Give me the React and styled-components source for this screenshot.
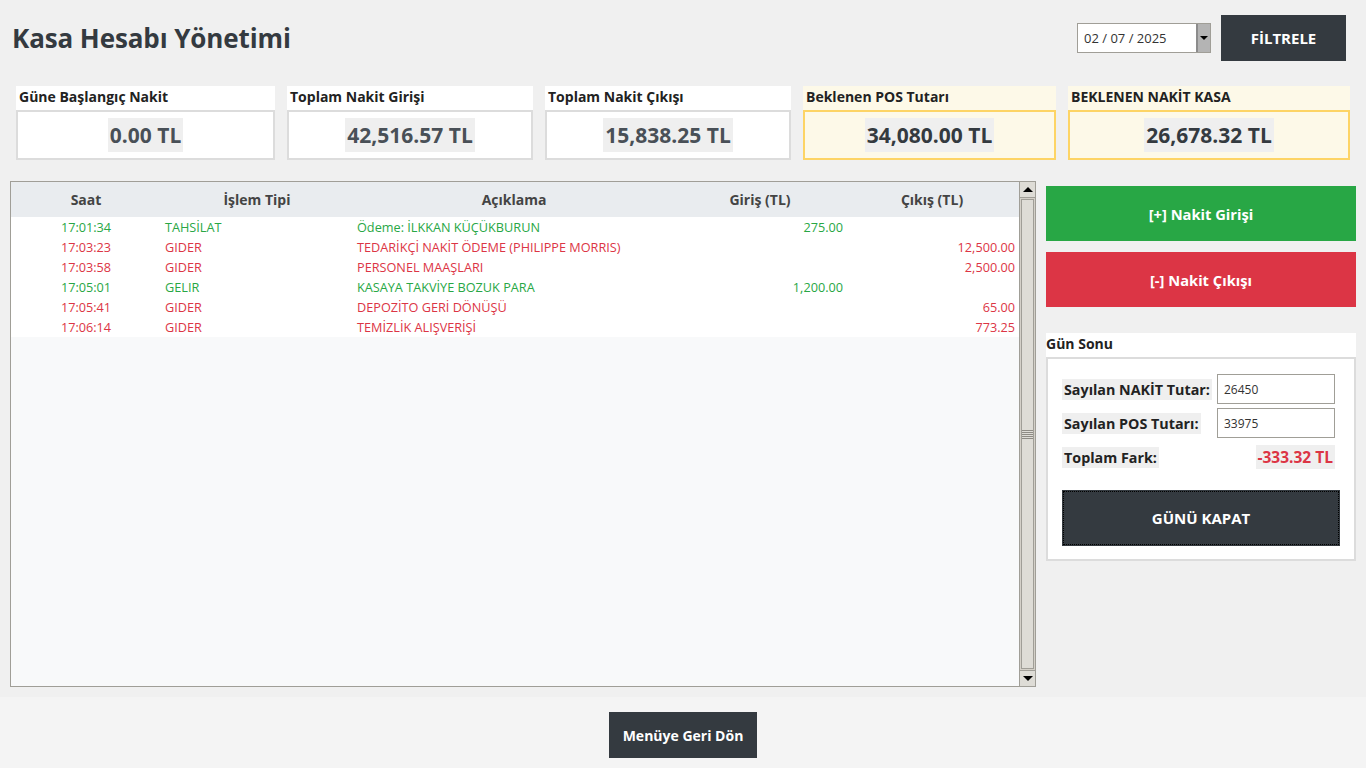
import React from "react";
import styled, { createGlobalStyle } from "styled-components";

const GlobalStyle = createGlobalStyle`
  body {
    margin: 0;
    background: #f0f0f0;
    font-family: "Open Sans", "Noto Sans", sans-serif;
    color: #343a40;
  }
`;

const Page = styled.div`
  width: 1366px;
  height: 768px;
  display: flex;
  flex-direction: column;
  overflow: hidden;
`;

const Main = styled.div`
  flex: 1;
  display: flex;
  flex-direction: column;
`;

const Header = styled.div`
  display: flex;
  align-items: center;
  justify-content: space-between;
  padding: 15px 20px 0 12px;
  height: 46px;
`;

const Title = styled.h1`
  margin: 0;
  font-size: 26px;
  font-weight: 700;
  color: #343a40;
  letter-spacing: -0.1px;
`;

const FilterBox = styled.div`
  display: flex;
  align-items: center;
  gap: 10px;
`;

const DateInput = styled.div`
  width: 132px;
  height: 28px;
  border: 1px solid #a09e97;
  background: #fff;
  display: flex;
  align-items: stretch;
`;

const DateText = styled.span`
  flex: 1;
  display: flex;
  align-items: center;
  padding-left: 6px;
  font-size: 13px;
  color: #333;
`;

const DropBtn = styled.span`
  width: 12px;
  background: #b4b4b4;
  border-left: 2px solid #8c8c8c;
  display: flex;
  align-items: center;
  justify-content: center;
  &::after {
    content: "";
    border-left: 4px solid transparent;
    border-right: 4px solid transparent;
    border-top: 4px solid #000;
  }
`;

const DarkButton = styled.button`
  background: #343a40;
  color: #fff;
  border: none;
  font-family: inherit;
  font-weight: 700;
  font-size: ${p => p.size || 14}px;
  width: ${p => p.w}px;
  height: ${p => p.h}px;
  padding: 0;
  cursor: pointer;
`;

const Cards = styled.div`
  display: flex;
  gap: 12px;
  padding-left: 16px;
  margin-top: 25px;
`;

const Card = styled.div`
  width: ${p => p.w}px;
  display: flex;
  flex-direction: column;
  background: ${p => (p.warn ? "#fdf9e8" : "#fff")};
`;

const CardLabel = styled.div`
  height: 24px;
  display: flex;
  align-items: center;
  padding: 0 0 3px 3px;
  box-sizing: border-box;
  font-size: 14px;
  font-weight: 700;
  color: #222;
`;

const CardValueBox = styled.div`
  height: 46px;
  border: 2px solid ${p => (p.warn ? "#fdd465" : "#dcdcdc")};
  display: flex;
  align-items: center;
  justify-content: center;
`;

const CardValue = styled.span`
  background: #efefef;
  padding: 2px 2px;
  font-size: 21px;
  line-height: 30px;
  font-weight: 700;
  color: ${p => (p.warn ? "#343a40" : "#495057")};
`;

const Content = styled.div`
  display: flex;
  gap: 10px;
  padding-left: 10px;
  margin-top: 21px;
`;

const TableFrame = styled.div`
  width: 1024px;
  height: 504px;
  border: 1px solid #a09e97;
  display: flex;
  background: #f8f9fa;
`;

const TableBody = styled.div`
  flex: 1;
  display: flex;
  flex-direction: column;
`;

const Row = styled.div`
  display: grid;
  grid-template-columns: 150px 192px 322px 170px 174px;
  height: ${p => (p.head ? 35 : 20)}px;
  align-items: center;
  background: ${p => (p.head ? "#e9ecef" : "#fff")};
  font-size: ${p => (p.head ? 14 : 12.7)}px;
  font-weight: ${p => (p.head ? 700 : 400)};
  color: ${p => p.color || "#444"};
`;

const Cell = styled.div`
  text-align: ${p => p.align || "left"};
  padding: 0 ${p => p.pr || 0}px 0 ${p => p.pl || 0}px;
  white-space: nowrap;
  overflow: hidden;
`;

const Scrollbar = styled.div`
  width: 15px;
  border-left: 1px solid #a09e97;
  background: #d4d0c8;
  display: flex;
  flex-direction: column;
`;

const ArrowBtn = styled.div`
  height: 15px;
  background: #dedcd6;
  border-bottom: ${p => (p.up ? "1px solid #a09e97" : "none")};
  border-top: ${p => (p.up ? "none" : "1px solid #a09e97")};
  display: flex;
  align-items: center;
  justify-content: center;
  &::after {
    content: "";
    border-left: 5px solid transparent;
    border-right: 5px solid transparent;
    ${p => (p.up ? "border-bottom: 5px solid #000;" : "border-top: 5px solid #000;")}
  }
`;

const Thumb = styled.div`
  flex: 1;
  margin: 1px 1px;
  background: #dedcd6;
  border: 1px solid #a09e97;
  display: flex;
  align-items: center;
  justify-content: center;
`;

const Grip = styled.div`
  width: 11px;
  height: 9px;
  background: repeating-linear-gradient(
    to bottom,
    #8e8b84 0px,
    #8e8b84 1px,
    transparent 1px,
    transparent 2px
  );
`;

const Side = styled.div`
  width: 310px;
  display: flex;
  flex-direction: column;
  padding-top: 5px;
`;

const ActionButton = styled.button`
  height: 55px;
  border: none;
  background: ${p => p.bg};
  color: #fff;
  font-family: inherit;
  font-weight: 700;
  font-size: 14.7px;
  margin-bottom: 11px;
  cursor: pointer;
`;

const SectionLabel = styled.div`
  margin-top: 15px;
  height: 24px;
  background: #fff;
  display: flex;
  align-items: center;
  padding-bottom: 3px;
  box-sizing: border-box;
  font-size: 14px;
  font-weight: 700;
  color: #222;
`;

const SectionBox = styled.div`
  background: #fff;
  border: 2px solid #dcdcdc;
  padding: 15px 14px 13px 14px;
  display: flex;
  flex-direction: column;
`;

const FormRow = styled.div`
  display: flex;
  align-items: center;
  justify-content: space-between;
  height: 30px;
  margin-bottom: 4px;
  padding-right: 5px;
`;

const FormLabel = styled.span`
  background: #efefef;
  padding: 1px 2px;
  font-size: ${p => p.size || 14.3}px;
  font-weight: 700;
  color: ${p => p.color || "#222"};
`;

const FormInput = styled.div`
  width: 110px;
  height: 28px;
  border: 1px solid #a09e97;
  display: flex;
  align-items: center;
  padding-left: 6px;
  font-size: 12px;
  color: #333;
`;

const CloseButton = styled.button`
  margin-top: 14px;
  height: 56px;
  width: 278px;
  background: #343a40;
  color: #fff;
  border: none;
  outline: 1px dotted #000;
  outline-offset: -2px;
  font-family: inherit;
  font-weight: 700;
  font-size: 15px;
  cursor: pointer;
`;

const Footer = styled.div`
  height: 71px;
  background: #f4f4f4;
  display: flex;
  justify-content: center;
  padding-top: 15px;
  box-sizing: border-box;
`;

const GREEN = "#28a745";
const RED = "#dc3545";

const cards = [
  { label: "Güne Başlangıç Nakit", value: "0.00 TL", w: 259 },
  { label: "Toplam Nakit Girişi", value: "42,516.57 TL", w: 246 },
  { label: "Toplam Nakit Çıkışı", value: "15,838.25 TL", w: 246 },
  { label: "Beklenen POS Tutarı", value: "34,080.00 TL", w: 253, warn: true },
  { label: "BEKLENEN NAKİT KASA", value: "26,678.32 TL", w: 282, warn: true },
];

const rows = [
  { time: "17:01:34", type: "TAHSİLAT", desc: "Ödeme: İLKKAN KÜÇÜKBURUN", inAmt: "275.00", out: "", color: GREEN },
  { time: "17:03:23", type: "GIDER", desc: "TEDARİKÇİ NAKİT ÖDEME (PHILIPPE MORRIS)", inAmt: "", out: "12,500.00", color: RED },
  { time: "17:03:58", type: "GIDER", desc: "PERSONEL MAAŞLARI", inAmt: "", out: "2,500.00", color: RED },
  { time: "17:05:01", type: "GELIR", desc: "KASAYA TAKVİYE BOZUK PARA", inAmt: "1,200.00", out: "", color: GREEN },
  { time: "17:05:41", type: "GIDER", desc: "DEPOZİTO GERİ DÖNÜŞÜ", inAmt: "", out: "65.00", color: RED },
  { time: "17:06:14", type: "GIDER", desc: "TEMİZLİK ALIŞVERİŞİ", inAmt: "", out: "773.25", color: RED },
];

export default function App() {
  return (
    <Page>
      <GlobalStyle />
      <Main>
        <Header>
          <Title>Kasa Hesabı Yönetimi</Title>
          <FilterBox>
            <DateInput>
              <DateText>02 / 07 / 2025</DateText>
              <DropBtn />
            </DateInput>
            <DarkButton w={125} h={46} size={15}>FİLTRELE</DarkButton>
          </FilterBox>
        </Header>

        <Cards>
          {cards.map(c => (
            <Card key={c.label} w={c.w} warn={c.warn}>
              <CardLabel>{c.label}</CardLabel>
              <CardValueBox warn={c.warn}>
                <CardValue warn={c.warn}>{c.value}</CardValue>
              </CardValueBox>
            </Card>
          ))}
        </Cards>

        <Content>
          <TableFrame>
            <TableBody>
              <Row head>
                <Cell align="center">Saat</Cell>
                <Cell align="center">İşlem Tipi</Cell>
                <Cell align="center">Açıklama</Cell>
                <Cell align="center">Giriş (TL)</Cell>
                <Cell align="center">Çıkış (TL)</Cell>
              </Row>
              {rows.map(r => (
                <Row key={r.time} color={r.color}>
                  <Cell align="center">{r.time}</Cell>
                  <Cell pl={4}>{r.type}</Cell>
                  <Cell pl={4}>{r.desc}</Cell>
                  <Cell align="right" pr={2}>{r.inAmt}</Cell>
                  <Cell align="right" pr={4}>{r.out}</Cell>
                </Row>
              ))}
            </TableBody>
            <Scrollbar>
              <ArrowBtn up />
              <Thumb>
                <Grip />
              </Thumb>
              <ArrowBtn />
            </Scrollbar>
          </TableFrame>

          <Side>
            <ActionButton bg={GREEN}>[+] Nakit Girişi</ActionButton>
            <ActionButton bg={RED}>[-] Nakit Çıkışı</ActionButton>
            <SectionLabel>Gün Sonu</SectionLabel>
            <SectionBox>
              <FormRow>
                <FormLabel>Sayılan NAKİT Tutar:</FormLabel>
                <FormInput>26450</FormInput>
              </FormRow>
              <FormRow>
                <FormLabel>Sayılan POS Tutarı:</FormLabel>
                <FormInput>33975</FormInput>
              </FormRow>
              <FormRow>
                <FormLabel>Toplam Fark:</FormLabel>
                <FormLabel color={RED} size={15.5}>-333.32 TL</FormLabel>
              </FormRow>
              <CloseButton>GÜNÜ KAPAT</CloseButton>
            </SectionBox>
          </Side>
        </Content>
      </Main>

      <Footer>
        <DarkButton w={148} h={46}>Menüye Geri Dön</DarkButton>
      </Footer>
    </Page>
  );
}
